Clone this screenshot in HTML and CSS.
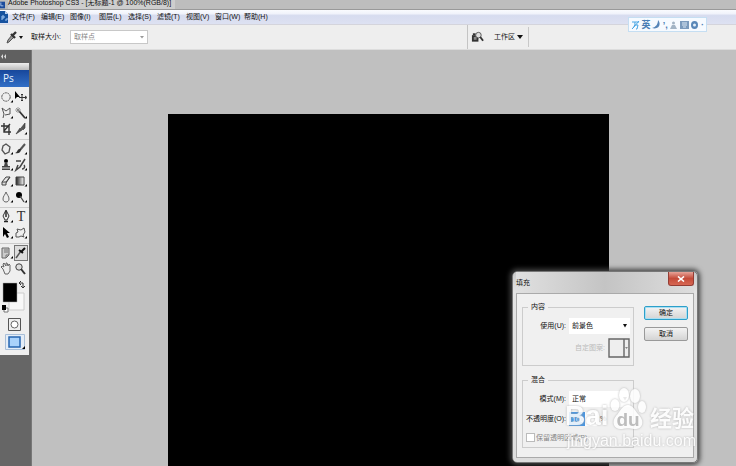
FILE: index.html
```html
<!DOCTYPE html>
<html lang="zh-CN">
<head>
<meta charset="utf-8">
<title>Adobe Photoshop CS3</title>
<link rel="stylesheet" href="styles.css">
</head>
<body>
<div class="app">
  <header class="titlebar">
    <svg class="app-icon" viewBox="0 0 6 8"><rect width="6" height="8" fill="#1d4c9c"/><path d="M1 1v4h3" stroke="#bcd4f6" fill="none"/></svg>
    <span class="title">Adobe Photoshop CS3 - [无标题-1 @ 100%(RGB/8)]</span>
  </header>
  <nav class="menubar">
    <svg class="menu-icon" viewBox="0 0 9 12"><path d="M0 0h5l3 3v9H0z" fill="#16529f"/><path d="M5 0v3h3" fill="#b9d0ef"/><path d="M2 9V5h2v2H2M5 9h2V7" stroke="#9fc5f2" fill="none"/></svg>
    <a href="#">文件(F)</a><a href="#">编辑(E)</a><a href="#">图像(I)</a><a href="#">图层(L)</a><a href="#">选择(S)</a><a href="#">滤镜(T)</a><a href="#">视图(V)</a><a href="#">窗口(W)</a><a href="#">帮助(H)</a>
  </nav>
  <section class="options">
    <div class="sample">
      <svg class="dropper" viewBox="0 0 18 14"><path d="M2 13l1-3 4-5 2 2-5 5z" fill="#999" stroke="#555"/><path d="M6 4l4 4M8 5l3-3" stroke="#333" stroke-width="2.4"/><path d="M14 6h4l-2 3z" fill="#111"/></svg>
      <label for="sample">取样大小:</label>
      <span class="combo combo-off">
        <select id="sample" disabled><option>取样点</option></select>
        <svg viewBox="0 0 6 4"><path d="M1 1h4L3 3.5z" fill="#999"/></svg>
      </span>
    </div>
    <div class="workspace-menu">
      <svg class="bridge" viewBox="0 0 14 12"><path d="M1 4h7v7H1z" fill="#333"/><path d="M2 3h3" stroke="#333" stroke-width="2"/><path d="M3 6h3v3H3z" fill="#888"/><circle cx="8" cy="4" r="3" fill="#ddd" stroke="#555"/><path d="M10 6l3 4" stroke="#333" stroke-width="2"/></svg>
      <button class="flat" type="button">工作区<svg viewBox="0 0 6 4"><path d="M0 0h6L3 4z" fill="#111"/></svg></button>
    </div>
  </section>
  <main class="stage">
    <aside class="dock">
      <div class="dock-head"><svg viewBox="0 0 6 5"><path d="M3 0L1 2.5 3 5zM6 0L4 2.5 6 5z" fill="#ddd"/></svg></div>
      <div class="toolbox">
        <div class="grip"></div>
        <div class="ps">Ps</div>
        <div class="tools">
          <button aria-label="选框"><svg viewBox="0 0 14 16"><circle cx="6" cy="8" r="4.2" fill="none" stroke="#555" stroke-dasharray="2 .6"/><path d="M13 11v2.5h-2.5z"/></svg></button>
          <button aria-label="移动"><svg viewBox="0 0 14 16"><path d="M1 2v8l2-2 3 0z"/><path d="M8 5v7M5 8.500h7M7 6l1-1 1 1M7 11l1 1 1-1M11 7l2 1.500-2 1.500" stroke="#333" fill="none"/></svg></button>
          <button aria-label="套索"><svg viewBox="0 0 14 16"><path d="M3 13l1-4-2-6 4 3 4-3v6l-5 1" fill="none" stroke="#555"/><path d="M13 11v2.5h-2.5z"/></svg></button>
          <button aria-label="魔棒"><svg viewBox="0 0 14 16"><path d="M5 6l6 7" stroke="#333" stroke-width="1.800"/><path d="M4 2v6M1 5h6M2 3l4 4M6 3L2 7" stroke="#777" stroke-width=".7"/><path d="M13 11v2.5h-2.5z"/></svg></button>
          <button aria-label="裁剪"><svg viewBox="0 0 14 16"><path d="M4 2v9h7M1 5h8v9M10 3L4 10" fill="none" stroke="#333" stroke-width="1.4"/></svg></button>
          <button aria-label="切片"><svg viewBox="0 0 14 16"><path d="M2 13l4-6 2 2zM7 7l4-5v5l-2 2z" fill="#555" stroke="#333" stroke-width=".6"/><path d="M13 11v2.5h-2.5z"/></svg></button>
        </div>
        <div class="tools">
          <button aria-label="修复"><svg viewBox="0 0 14 16"><path d="M6 3l4 3-1 5-4 2-3-4 1-4z" fill="#eee" stroke="#555" stroke-width="1.300"/><path d="M13 11v2.5h-2.5z"/></svg></button>
          <button aria-label="画笔"><svg viewBox="0 0 14 16"><path d="M11 3L6 9" stroke="#555" stroke-width="2"/><path d="M7 8c0 4-3 5-6 4 2 0 2-3 4-4z" fill="#333"/><path d="M13 11v2.5h-2.5z"/></svg></button>
          <button aria-label="图章"><svg viewBox="0 0 14 16"><circle cx="6" cy="4" r="2"/><path d="M5 5h2l1 4h2v4H2V9h2z" fill="#444"/><path d="M2 11h8" stroke="#ddd"/><path d="M13 11v2.500h-2.500z"/></svg></button>
          <button aria-label="历史画笔"><svg viewBox="0 0 14 16"><path d="M11 2L6 10l-4 3 2-5M2 4h5M8 12c3 0 3-3 2-4" fill="none" stroke="#444" stroke-width="1.500"/><path d="M13 11v2.500h-2.500z"/></svg></button>
          <button aria-label="橡皮"><svg viewBox="0 0 14 16"><path d="M2 9l4-5h4l-4 6v2H2zM2 9h4l4-5" fill="#ddd" stroke="#444"/><path d="M13 11v2.500h-2.500z"/></svg></button>
          <button aria-label="渐变"><svg viewBox="0 0 14 16"><defs><linearGradient id="g"><stop stop-color="#222"/><stop offset="1" stop-color="#fff"/></linearGradient></defs><path d="M2 4h8v8H2z" fill="url(#g)" stroke="#444"/><path d="M13 11v2.500h-2.500z"/></svg></button>
          <button aria-label="模糊"><svg viewBox="0 0 14 16"><path d="M6 3c1 3 3 4 3 7 0 4-6 4-6 0 0-3 2-4 3-7z" fill="#eee" stroke="#666"/><path d="M13 11v2.500h-2.500z"/></svg></button>
          <button aria-label="减淡"><svg viewBox="0 0 14 16"><circle cx="5" cy="6" r="3"/><path d="M6 7l4 6" stroke="#444" stroke-width="1.300"/><path d="M13 11v2.500h-2.500z"/></svg></button>
        </div>
        <div class="tools">
          <button aria-label="钢笔"><svg viewBox="0 0 14 16"><path d="M6 1l3 6-2 4H5L3 7z" fill="#eee" stroke="#333"/><path d="M6 2v6M4 12.500h4" stroke="#222" stroke-width="1.400"/><path d="M13 11v2.500h-2.500z"/></svg></button>
          <button aria-label="文字" class="type">T</button>
          <button aria-label="选择"><svg viewBox="0 0 14 16"><path d="M3 2v10l2-3 2 4 2-1-2-4h3z"/><path d="M13 11v2.500h-2.500z"/></svg></button>
          <button aria-label="形状"><svg viewBox="0 0 14 16"><path d="M2 12V8l2-1-1-3 4 1 3-2 1 4-2 3 1 2-3-1-2 1z" fill="#eee" stroke="#555"/><path d="M13 11v2.500h-2.500z"/></svg></button>
        </div>
        <div class="tools">
          <button aria-label="注释"><svg viewBox="0 0 14 16"><path d="M2 3h7v7l-3 3H2z" fill="#ccc" stroke="#666"/><path d="M4 5h4M4 7h4M6 13v-3h3" stroke="#777" fill="none"/><path d="M13 11v2.500h-2.500z"/></svg></button>
          <button aria-label="吸管" class="on"><svg viewBox="0 0 14 16"><path d="M2 13l5-7" stroke="#555" stroke-width="1.500"/><path d="M5 5l4 3M7 7l4-4" stroke="#111" stroke-width="2"/></svg></button>
          <button aria-label="抓手"><svg viewBox="0 0 14 16"><path d="M3 8L1 6l1-1 2 1-1-3 1-1 2 3V2h1l1 3 1-2 1 1v6l-2 3H5z" fill="#eee" stroke="#666"/></svg></button>
          <button aria-label="缩放"><svg viewBox="0 0 14 16"><circle cx="5" cy="6" r="3.200" fill="#ddd" stroke="#444"/><path d="M7 8l4 5" stroke="#333" stroke-width="2"/></svg></button>
        </div>
        <svg class="colors" viewBox="0 0 29 36"><path d="M9 14h15v17H9z" fill="#f8f8f8" stroke="#ccc"/><path d="M3 4h14v19H3z" fill="#000" stroke="#aaa" stroke-width=".5"/><path d="M20 4h3v5M21 2l-2 2 2 2M21 7l2 2 2-2" stroke="#333" fill="none"/><path d="M4 29h4v4H4z" fill="#fff" stroke="#777"/><path d="M2 26h4v5H2z"/></svg>
        <button class="mask" aria-label="快速蒙版"><svg viewBox="0 0 13 13"><path d="M.5 .5h12v12H.5z" fill="#eee" stroke="#555"/><circle cx="6.500" cy="6.500" r="3.500" fill="#fff" stroke="#666"/></svg></button>
        <button class="mask screen" aria-label="屏幕模式"><svg viewBox="0 0 20 16"><path d="M.5 .5h19v15H.5z" fill="#e4edf7" stroke="#a9bfd8"/><path d="M4 3h11v10H4z" fill="#a9d2fb" stroke="#2666b1" stroke-width="1.500"/><path d="M20 12v3h-3z"/></svg></button>
      </div>
    </aside>
    <div class="document"></div>
  </main>

  <div class="ime">
    <svg viewBox="0 0 9 10"><path d="M1 2h7M4 2C4 6 3 7 1 9M4 5h3L6 9H5M8 1L2 8" fill="none" stroke="#4aa6e4"/></svg>
    <span>英</span>
    <svg viewBox="0 0 9 10"><path d="M6 0c4 5 0 10-6 8 4-1 6-4 6-8z" fill="#5685b8"/></svg>
    <span>’,</span>
    <svg viewBox="0 0 9 10"><circle cx="4.500" cy="3" r="1.500" fill="#a3b4c5"/><path d="M3 5h3l2 4H1z" fill="#a3b4c5"/></svg>
    <svg viewBox="0 0 9 10"><path d="M0 1h9v8H0z" fill="#7c9bbd"/><path d="M2 3h5M2 5h5M3 7h3" stroke="#dce8f4"/></svg>
    <svg viewBox="0 0 9 10"><ellipse cx="4.500" cy="5" rx="3.500" ry="4" fill="#5987b8"/><circle cx="4.500" cy="5" r="1.500" fill="#e5eff9"/></svg>
    <span>·</span>
  </div>

  <form class="dialog" role="dialog" aria-label="填充">
    <div class="dialog-title"><span>填充</span><button class="close" type="button" aria-label="关闭"><svg viewBox="0 0 8 6"><path d="M1 .5l6 5M7 .5l-6 5" stroke="#fff" stroke-width="1.600"/></svg></button></div>
    <div class="dialog-body">
      <div class="groups">
        <fieldset>
          <legend>内容</legend>
          <div class="row"><label for="use">使用(U):</label><span class="combo"><select id="use"><option>前景色</option></select><svg viewBox="0 0 6 4"><path d="M1 0h4L3 3.500z" fill="#111"/></svg></span></div>
          <div class="row tall"><span class="off">自定图案:</span><svg class="pattern" viewBox="0 0 22 20"><path d="M1 1h20v18H1zM16 1v18" fill="#eee" stroke="#666" stroke-width="1.400"/><path d="M17 9h3l-1.500 2z" fill="#888"/></svg></div>
        </fieldset>
        <fieldset class="blend">
          <legend>混合</legend>
          <div class="row"><label for="mode">模式(M):</label><span class="combo"><select id="mode"><option>正常</option></select><svg viewBox="0 0 6 4"><path d="M1 0h4L3 3.500z" fill="#777"/></svg></span></div>
          <div class="row"><label for="opacity">不透明度(O):</label><span class="percent"><input id="opacity" value="100"><span>%</span></span></div>
          <label class="check"><input type="checkbox" disabled>保留透明区域(P)</label>
        </fieldset>
      </div>
      <div class="actions"><button class="ok" type="submit">确定</button><button type="button">取消</button></div>
    </div>
  </form>

  <div class="watermark">
    <div class="brand"><span class="bai">Bai</span><span class="paw"><svg viewBox="0 0 36 44"><g fill="#fff"><ellipse cx="5" cy="17" rx="4.500" ry="6"/><ellipse cx="14" cy="7" rx="5" ry="7"/><ellipse cx="25" cy="8" rx="5" ry="7"/><ellipse cx="32" cy="19" rx="4" ry="6"/><path d="M18 17c5 0 7 6 11 10 7 8 2 15-5 14-5-1-8-1-12 0C4 42 1 34 6 28c4-4 6-11 12-11z"/></g></svg><b>du</b></span><span class="jy">经验</span></div>
    <div class="url">jingyan.baidu.com</div>
  </div>
</div>
</body>
</html>
```
FILE: styles.css
```css
* { box-sizing: border-box; }
body {
  margin: 0;
  font: 7px/12px "Liberation Sans", "Noto Sans CJK SC", sans-serif;
  color: #111;
}
button, select, input { font: inherit; color: inherit; margin: 0; padding: 0; }
button { border: 0; background: none; }
a { color: inherit; text-decoration: none; }
svg { display: block; flex: none; }

.app {
  position: relative;
  display: flex;
  flex-direction: column;
  min-height: 100vh;
  overflow: hidden;
  background: #c0c0c0;
}
.titlebar {
  display: flex;
  align-items: flex-end;
  gap: 3px;
  height: 10px;
  background: #bdbdbd;
  border-bottom: 1px solid #999;
}
.app-icon { width: 5px; height: 8px; }
.title { line-height: 12px; padding-right: 4px; background: #cecece; white-space: nowrap; }
.menubar {
  display: flex;
  align-items: center;
  height: 15px;
  background: linear-gradient(#fafbfe 0, #f1f3fb 25%, #d7dcef 40%, #dde1f2 100%);
  border-bottom: 1px solid #d4d4dc;
}
.menu-icon { width: 9px; height: 12px; margin-right: 3px; }
.menubar a { width: 29px; white-space: nowrap; }

.options {
  display: flex;
  align-items: stretch;
  height: 25px;
  background: #eeeeee;
  border-bottom: 1px solid #ddd;
}
.sample {
  display: flex;
  align-items: center;
  flex: 0 0 468px;
  padding-left: 5px;
  border-right: 1px solid #c4c4c4;
}
.sample label { margin: 0 9px 0 8px; white-space: nowrap; }
.dropper { width: 18px; height: 14px; }
.combo { position: relative; width: 61px; height: 16px; background: #fff; }
.combo select {
  display: block;
  width: 100%;
  height: 100%;
  padding: 0 3px;
  border: 0;
  appearance: none;
  background: none;
}
.combo svg { position: absolute; right: 2px; top: 6px; width: 6px; height: 4px; pointer-events: none; }
.combo-off { width: 78px; height: 14px; border: 1px solid #c8c8c8; color: #888; }
.combo-off select { opacity: 1; }
.combo-off svg { top: 4px; }
.workspace-menu {
  display: flex;
  align-items: center;
  gap: 10px;
  margin: 2px 0;
  padding: 0 5px 0 3px;
  border-right: 1px solid #c8c8c8;
}
.bridge { width: 13px; height: 12px; }
.flat { display: flex; align-items: center; gap: 2px; white-space: nowrap; }
.flat svg { width: 6px; height: 4px; }

.stage { display: flex; flex: 1; }
.dock { width: 32px; background: #666; border-right: 1px solid #777; }
.dock-head { height: 13px; padding-top: 4px; background: #606060; }
.dock-head svg { width: 6px; height: 5px; }
.toolbox { width: 29px; padding-bottom: 5px; background: #efefef; }
.grip { height: 7px; background: linear-gradient(#eee, #bbb); }
.ps {
  height: 17px;
  margin-bottom: 2px;
  padding-left: 3px;
  font: 10px/17px "Open Sans", sans-serif;
  color: #e6f2ff;
  background: linear-gradient(#17479b, #326fc6);
}
.tools {
  display: grid;
  grid-template-columns: 14px 14px;
  padding-bottom: 2px;
  margin-bottom: 1px;
  border-bottom: 1px solid #ccc;
}
.tools + .tools + .tools + .tools { border: 0; margin: 0; }
.tools button { height: 16px; }
.tools svg { width: 14px; height: 16px; }
.tools .type { font: 14px/16px "Liberation Serif", serif; color: #333; }
.tools .on { background: #ddd; outline: 1px solid #777; outline-offset: -1px; }
.colors { width: 29px; height: 36px; }
.mask { display: block; margin: 3px auto 0; }
.mask svg { width: 13px; height: 13px; }
.mask.screen svg { width: 20px; height: 16px; }
.document {
  flex: 1;
  margin: 64px 127px 0 136px;
  background: #000;
}

.ime {
  position: absolute;
  top: 17px;
  right: 29px;
  display: flex;
  align-items: center;
  justify-content: space-between;
  width: 79px;
  height: 15px;
  padding: 0 2px;
  font-size: 9px;
  font-weight: bold;
  color: #4c7eb4;
  background: #f6faff;
  border: 1px solid #c5def2;
}
.ime svg { width: 9px; height: 10px; }

.dialog {
  position: absolute;
  top: 271px;
  right: 38px;
  width: 186px;
  padding: 0 3px 4px;
  border: 1px solid #777;
  border-radius: 5px;
  background: linear-gradient(#c8c8c8, #e4e4e4 20px, #ddd);
  box-shadow: 0 0 5px 2px #444;
}
.dialog-title {
  display: flex;
  justify-content: space-between;
  height: 21px;
  line-height: 21px;
  background: linear-gradient(90deg, #e0e0e0, #c4c4c4 50%, #ddd);
}
.close {
  display: flex;
  align-items: center;
  justify-content: center;
  width: 26px;
  height: 14px;
  border: 1px solid #943d34;
  border-top: 0;
  border-radius: 0 0 3px 3px;
  background: linear-gradient(#e7a398, #c44b39 50%, #d76753);
}
.close svg { width: 8px; height: 6px; }
.dialog-body {
  display: flex;
  gap: 10px;
  padding: 7px 5px 9px;
  background: #f0f0f0;
  border: 1px solid #aaa;
}
.groups { flex: 0 0 112px; min-width: 0; }
fieldset { min-width: 0; height: 65px; margin: 0; padding: 3px 3px 0; border: 1px solid #ccc; }
legend { margin-left: 2px; padding: 0 3px; }
.blend { height: 74px; margin-top: 8px; }
.row { display: flex; align-items: center; justify-content: flex-end; gap: 3px; height: 20px; white-space: nowrap; }
.row.tall { height: 24px; }
.off { color: #bbb; }
.pattern { width: 22px; height: 20px; }
.percent { display: flex; align-items: center; width: 61px; gap: 3px; }
.percent input { width: 28px; height: 14px; padding-left: 3px; border: 0; color: #fff; background: linear-gradient(90deg, #4995df 16px, #fff 16px); }
.check { display: flex; align-items: center; gap: 1px; height: 17px; color: #888; white-space: nowrap; }
.check input { width: 9px; height: 9px; flex: none; appearance: none; border: 1px solid #bbb; background: #fff; }
.actions { display: flex; flex: 1; flex-direction: column; gap: 7px; padding-top: 5px; }
.actions button {
  height: 14px;
  line-height: 12px;
  border: 1px solid #999;
  border-radius: 2px;
  background: linear-gradient(#f3f3f3, #d4d4d4);
}
.actions .ok { border-color: #2d9fc9; box-shadow: inset 0 0 0 1px #a8dff3; }

.watermark {
  position: absolute;
  right: 40px;
  top: 386px;
  width: 131px;
  color: #fff;
  opacity: .85;
  filter: drop-shadow(0 0 1px #aaa);
  pointer-events: none;
}
.brand { display: flex; align-items: flex-end; height: 46px; white-space: nowrap; }
.bai { width: 45px; font: bold 28px/32px "Liberation Sans", sans-serif; }
.paw { display: grid; width: 36px; }
.paw svg, .paw b { grid-area: 1 / 1; }
.paw svg { width: 36px; height: 44px; }
.paw b { align-self: end; text-align: center; font: bold 19px/24px "Liberation Sans", sans-serif; color: #b5b5b5; }
.jy { margin-left: 4px; font: bold 22px/32px "Noto Sans CJK SC", sans-serif; }
.url { font: 16px/18px "Liberation Sans", sans-serif; text-align: right; white-space: nowrap; }
```
